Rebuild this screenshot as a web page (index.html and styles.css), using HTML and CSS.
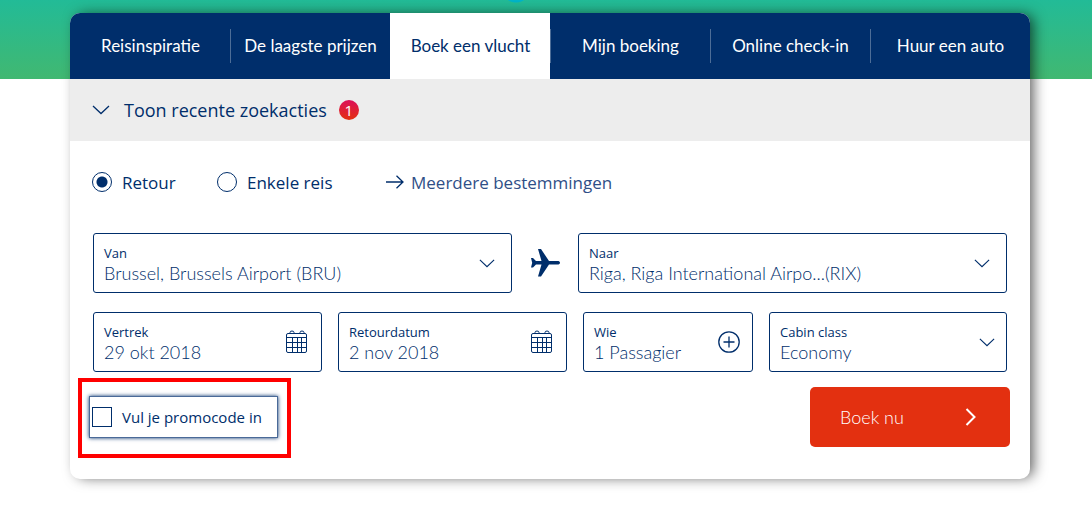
FILE: index.html
```html
<!DOCTYPE html>
<html lang="nl">
<head>
  <meta charset="UTF-8">
  <meta name="viewport" content="width=device-width, initial-scale=1">
  <title>Boek een vlucht</title>
  <link rel="stylesheet" href="styles.css">
</head>
<body>

  <main class="booking">
    <nav class="tabs">
      <div class="tab"><a href="#">Reisinspiratie</a></div>
      <div class="tab divided"><a href="#">De laagste prijzen</a></div>
      <div class="tab active"><a href="#">Boek een vlucht</a></div>
      <div class="tab divided"><a href="#">Mijn boeking</a></div>
      <div class="tab divided"><a href="#">Online check-in</a></div>
      <div class="tab divided"><a href="#">Huur een auto</a></div>
    </nav>

    <button type="button" class="recent">
      <svg class="chevron" width="18" height="10" viewBox="0 0 18 10"><path d="M1 1l8 7.500 8-7.500"/></svg>
      <span>Toon recente zoekacties</span>
      <span class="badge">1</span>
    </button>

    <form class="search">
      <div class="trip">
        <label class="retour"><input type="radio" name="trip" checked>Retour</label>
        <label class="single"><input type="radio" name="trip">Enkele reis</label>
        <a href="#" class="multi">
          <svg width="18" height="14" viewBox="0 0 18 14"><path d="M0 7h17M10.500 0.800L17 7l-6.500 6.200"/></svg>
          Meerdere bestemmingen
        </a>
      </div>

      <div class="route">
        <div class="field">
          <div class="text">
            <label for="from">Van</label>
            <input type="text" id="from" value="Brussel, Brussels Airport (BRU)">
          </div>
          <svg class="chevron" width="16" height="9" viewBox="0 0 18 10"><path d="M1 1l8 7.500 8-7.500"/></svg>
        </div>
        <svg class="plane" width="30" height="28" viewBox="0 0 30 28"><path d="M8 0h3l8 12h8.500c1.500 0 2.500 0.600 2.500 1.800s-1 1.800-2.500 1.800H19l-8 11.900H8l3.500-11.900H6l-3 2.900H1l1.200-4.700L1 9.100h2l3 2.900h5.500z"/></svg>
        <div class="field">
          <div class="text">
            <label for="to">Naar</label>
            <input type="text" id="to" value="Riga, Riga International Airpo...(RIX)">
          </div>
          <svg class="chevron" width="16" height="9" viewBox="0 0 18 10"><path d="M1 1l8 7.500 8-7.500"/></svg>
        </div>
      </div>

      <div class="details">
        <div class="field date">
          <div class="text">
            <label for="depart">Vertrek</label>
            <input type="text" id="depart" value="29 okt 2018">
          </div>
          <svg class="calendar" width="22" height="24" viewBox="0 0 22 24"><rect x="0.500" y="3.500" width="20" height="19" rx="1.500"/><path d="M1 7.500h20M1 12.500h20M1 17.500h20M6.500 7.500V22M11.500 7.500V22M15.500 7.500V22M4 3.500V2.500a2 1.500 0 0 1 4 0v1M14 3.500V2.500a2 1.500 0 0 1 4 0v1"/></svg>
        </div>
        <div class="field date">
          <div class="text">
            <label for="return">Retourdatum</label>
            <input type="text" id="return" value="2 nov 2018">
          </div>
          <svg class="calendar" width="22" height="24" viewBox="0 0 22 24"><rect x="0.500" y="3.500" width="20" height="19" rx="1.500"/><path d="M1 7.500h20M1 12.500h20M1 17.500h20M6.500 7.500V22M11.500 7.500V22M15.500 7.500V22M4 3.500V2.500a2 1.500 0 0 1 4 0v1M14 3.500V2.500a2 1.500 0 0 1 4 0v1"/></svg>
        </div>
        <div class="field who">
          <div class="text">
            <label for="who">Wie</label>
            <input type="text" id="who" value="1 Passagier">
          </div>
          <svg class="plus" width="22" height="22" viewBox="0 0 22 22"><circle cx="11" cy="11" r="10.200"/><path d="M5.500 11h11M11 5.500v11"/></svg>
        </div>
        <div class="field cabin">
          <div class="text">
            <label for="cabin">Cabin class</label>
            <select id="cabin"><option>Economy</option></select>
          </div>
          <svg class="chevron" width="16" height="9" viewBox="0 0 18 10"><path d="M1 1l8 7.500 8-7.500"/></svg>
        </div>
      </div>

      <div class="bottom">
        <div class="highlight">
          <label class="promo"><input type="checkbox">Vul je promocode in</label>
        </div>
        <button type="submit" class="submit">
          Boek nu
          <svg width="11" height="18" viewBox="0 0 11 18"><path d="M1.500 1l8 8-8 8"/></svg>
        </button>
      </div>
    </form>
  </main>

</body>
</html>
```
FILE: styles.css
```css
* {
  box-sizing: border-box;
}
body {
  margin: 0;
  padding: 13px 62px 46px 70px;
  background:
    radial-gradient(circle at 516px -12px, #00b4c8 14px, transparent 15px) no-repeat,
    linear-gradient(#22bb97, #41b871) no-repeat 0 0 / 100% 79px,
    white;
  font-family: "Open Sans", sans-serif;
  color: #002e6b;
}
a {
  color: inherit;
  text-decoration: none;
}
svg {
  flex: none;
  fill: none;
  stroke: #002e6b;
  stroke-width: 1.3;
}
input,
select,
button {
  margin: 0;
  padding: 0;
  border: 0;
  background: none;
  font: inherit;
  color: inherit;
}
.booking {
  border-radius: 10px;
  overflow: hidden;
  background: white;
  box-shadow: 5px 0 14px -2px rgba(0, 0, 0, 0.65);
}

/* Tabs */
.tabs {
  display: flex;
  background: #002e6b;
  color: white;
  font-family: Lato, sans-serif;
  font-size: 17px;
}
.tab {
  flex: 1;
  padding: 16px 0;
}
.tab a {
  display: block;
  line-height: 34px;
  text-align: center;
  white-space: nowrap;
  border-left: 1px solid transparent;
}
.tab.divided a {
  border-left-color: #4d6d97;
}
.tab.active {
  background: white;
  color: #002e6b;
}

.recent {
  display: flex;
  align-items: center;
  width: 100%;
  height: 62px;
  padding: 0 22px;
  background: #ededed;
  font-size: 18px;
  cursor: pointer;
}
.recent .chevron {
  margin-right: 14px;
}
.badge {
  width: 20px;
  margin-left: 12px;
  border-radius: 50%;
  background: linear-gradient(#dc0f5a, #e33010);
  color: white;
  font-size: 15px;
  line-height: 20px;
  text-align: center;
}

/* Search form */
.search {
  padding: 29px 23px 21px;
}
.trip {
  display: flex;
  align-items: center;
  height: 24px;
  margin: 0 0 39px -1px;
  font-size: 17px;
}
.trip label {
  display: flex;
  align-items: center;
}
.retour {
  width: 125px;
}
.single {
  width: 169px;
}
.trip input {
  appearance: none;
  width: 20px;
  height: 20px;
  margin-right: 10px;
  border: 1px solid #002e6b;
  border-radius: 50%;
}
.trip input:checked {
  background: radial-gradient(circle, #002e6b 5px, transparent 6px);
}
.multi {
  display: flex;
  align-items: center;
  gap: 7px;
  color: #2f4f87;
}
.route {
  display: grid;
  grid-template-columns: 419fr 66px 429fr;
  align-items: center;
  justify-items: center;
  margin-bottom: 19px;
}
.details {
  display: grid;
  grid-template-columns: 229fr 229fr 170fr 238fr;
  gap: 16px;
  margin-bottom: 6px;
}
.field {
  display: flex;
  align-items: center;
  width: 100%;
  min-width: 0;
  height: 60px;
  padding: 0 16px 0 10px;
  border: 1px solid #002e6b;
  border-radius: 3px;
}
.date {
  padding-right: 13px;
}
.who {
  padding-right: 12px;
}
.cabin {
  padding-right: 11px;
}
.text {
  flex: 1;
  min-width: 0;
  padding-top: 3px;
}
.text label {
  display: block;
  font-size: 13px;
  line-height: 16px;
}
.text input,
.text select {
  display: block;
  appearance: none;
  width: 100%;
  height: 24px;
  font-family: Lato, sans-serif;
  font-size: 18px;
  font-weight: 300;
}
.plane {
  fill: #002e6b;
  stroke: none;
}
.calendar {
  stroke-width: 1;
}

.bottom {
  display: flex;
  justify-content: space-between;
  align-items: flex-start;
}
.highlight {
  margin-left: -15px;
  padding: 14px 9px 16px 7px;
  border: 4px solid red;
}
.promo {
  display: flex;
  align-items: center;
  width: 189px;
  height: 42px;
  padding-left: 2px;
  border: 1px solid #4a6a98;
  box-shadow: 0 0 4px #002e6b;
  font-size: 15px;
  white-space: nowrap;
}
.promo input {
  appearance: none;
  width: 20px;
  height: 20px;
  margin-right: 10px;
  border: 1px solid #002e6b;
}
.submit {
  display: flex;
  justify-content: space-between;
  align-items: center;
  width: 200px;
  height: 60px;
  margin: 9px -3px 0 0;
  padding: 0 34px 0 30px;
  border-radius: 5px;
  background: #e33010;
  color: white;
  font-family: Lato, sans-serif;
  font-size: 18px;
  font-weight: 300;
  cursor: pointer;
}
.submit svg {
  stroke: white;
  stroke-width: 2;
}
```
